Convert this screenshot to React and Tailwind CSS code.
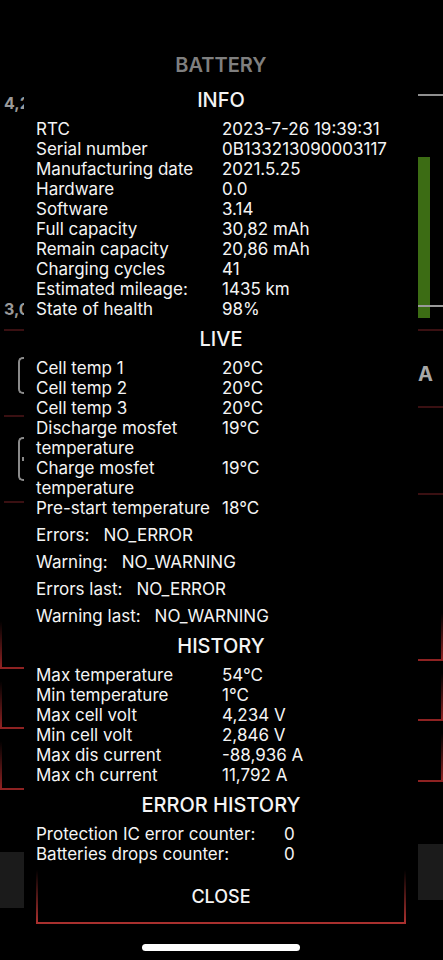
import React from "react";

const info = [
  ["RTC", "2023-7-26 19:39:31"],
  ["Serial number", "0B133213090003117"],
  ["Manufacturing date", "2021.5.25"],
  ["Hardware", "0.0"],
  ["Software", "3.14"],
  ["Full capacity", "30,82 mAh"],
  ["Remain capacity", "20,86 mAh"],
  ["Charging cycles", "41"],
  ["Estimated mileage:", "1435 km"],
  ["State of health", "98%"],
];

const live = [
  ["Cell temp 1", "20°C"],
  ["Cell temp 2", "20°C"],
  ["Cell temp 3", "20°C"],
  ["Discharge mosfet temperature", "19°C"],
  ["Charge mosfet temperature", "19°C"],
  ["Pre-start temperature", "18°C"],
];

const status = [
  ["Errors:", "NO_ERROR"],
  ["Warning:", "NO_WARNING"],
  ["Errors last:", "NO_ERROR"],
  ["Warning last:", "NO_WARNING"],
];

const history = [
  ["Max temperature", "54°C"],
  ["Min temperature", "1°C"],
  ["Max cell volt", "4,234 V"],
  ["Min cell volt", "2,846 V"],
  ["Max dis current", "-88,936 A"],
  ["Max ch current", "11,792 A"],
];

const errorHistory = [
  ["Protection IC error counter:", "0"],
  ["Batteries drops counter:", "0"],
];

const Row = ({ label, value, wide }) => (
  <div className="flex leading-5">
    <div className={wide ? "w-[248px] shrink-0" : "w-[186px] shrink-0"}>
      {label}
    </div>
    <div>{value}</div>
  </div>
);

const SectionTitle = ({ children }) => (
  <div className="mt-[8px] text-center text-[20px] leading-6 font-medium">
    {children}
  </div>
);

// red frame corners peeking out at the side of the dialog
const RedCorner = ({ side, className }) => (
  <div className={"flex flex-col " + className}>
    <div className={side === "left" ? "flex flex-1" : "flex flex-1 justify-end"}>
      <div className="w-[2px] bg-linear-to-b from-transparent to-[#8e2222]" />
    </div>
    <div className="h-[2px] bg-[#8e2222]" />
  </div>
);

const FaintLine = ({ className }) => (
  <div className={"h-[2px] bg-[#3a1012] " + className} />
);

const LeftStrip = () => (
  <div className="w-[24px] shrink-0 overflow-hidden flex flex-col">
    <div className="mt-[93px] pl-[4px] text-[16px] leading-5 font-bold text-[#9a9a9a] whitespace-nowrap">
      4,23
    </div>
    <div className="mt-[186px] pl-[4px] text-[16px] leading-5 font-bold text-[#9a9a9a] whitespace-nowrap">
      3,02
    </div>
    <FaintLine className="mt-[10px] ml-[4px]" />
    <div className="mt-[26px] ml-[18px] h-[37px] w-[10px] border-2 border-r-0 border-[#8a8a8a] rounded-l-[5px]" />
    <FaintLine className="mt-[21px] ml-[4px]" />
    <div className="mt-[20px] ml-[18px] h-[44px] w-[10px] border-2 border-r-0 border-[#8a8a8a] rounded-l-[5px] flex items-center">
      <div className="ml-[2px] h-[4px] w-[2px] bg-[#8a8a8a]" />
    </div>
    <FaintLine className="mt-[20px] ml-[4px]" />
    <RedCorner side="left" className="mt-[118px] h-[48px]" />
    <RedCorner side="left" className="mt-[12px] h-[48px]" />
    <RedCorner side="left" className="mt-[12px] h-[49px]" />
    <div className="mt-[62px] h-[56px] bg-[#1b1b1b]" />
  </div>
);

const RightStrip = () => (
  <div className="w-[25px] shrink-0 overflow-hidden flex flex-col">
    <div className="mt-[94px] h-[2px] bg-[#8f8f8f]" />
    <div className="mt-[61px] h-[148px] w-[12px] bg-[#3c6c14]" />
    <div className="h-[2px] bg-[#9a9a9a]" />
    <div className="h-[11px] w-[12px] bg-[#3c6c14]" />
    <FaintLine className="mt-[11px]" />
    <div className="mt-[31px] text-[20px] leading-6 font-bold text-[#a8a8a8]">
      A
    </div>
    <FaintLine className="mt-[20px]" />
    <FaintLine className="mt-[85px]" />
    <RedCorner side="right" className="mt-[118px] h-[48px]" />
    <RedCorner side="right" className="mt-[12px] h-[48px]" />
    <RedCorner side="right" className="mt-[12px] h-[49px]" />
    <div className="mt-[62px] h-[56px] bg-[#1b1b1b]" />
  </div>
);

export default function App() {
  return (
    <div className="h-[960px] w-full bg-black overflow-hidden flex font-[Inter,sans-serif]">
      <LeftStrip />
      <div className="flex-1 bg-black text-[#f4f4f4] text-[17px] px-3 flex flex-col">
        <div className="mt-[53px] text-center text-[20px] leading-6 font-semibold text-[#7f7f7f]">
          BATTERY
        </div>
        <div className="mt-[11px] text-center text-[20px] leading-6 font-medium">
          INFO
        </div>
        <div className="mt-[7px]">
          {info.map(([l, v]) => (
            <Row key={l} label={l} value={v} />
          ))}
        </div>

        <SectionTitle>LIVE</SectionTitle>
        <div className="mt-[7px]">
          {live.map(([l, v]) => (
            <Row key={l} label={l} value={v} />
          ))}
        </div>
        <div>
          {status.map(([l, v]) => (
            <div key={l} className="mt-[7px] flex gap-[14px] leading-5">
              <span>{l}</span>
              <span>{v}</span>
            </div>
          ))}
        </div>

        <SectionTitle>HISTORY</SectionTitle>
        <div className="mt-[7px]">
          {history.map(([l, v]) => (
            <Row key={l} label={l} value={v} />
          ))}
        </div>

        <SectionTitle>ERROR HISTORY</SectionTitle>
        <div className="mt-[7px]">
          {errorHistory.map(([l, v]) => (
            <Row key={l} label={l} value={v} wide />
          ))}
        </div>

        <div className="mt-[6px] h-[54px] flex flex-col">
          <div className="flex flex-1">
            <div className="w-[2px] bg-linear-to-b from-transparent to-[#a8302e]" />
            <div className="flex-1 flex items-center justify-center text-[18px] font-medium">
              CLOSE
            </div>
            <div className="w-[2px] bg-linear-to-b from-transparent to-[#a8302e]" />
          </div>
          <div className="h-[2px] bg-[#a8302e]" />
        </div>

        <div className="mt-[20px] mx-auto h-[7px] w-[158px] rounded-full bg-white" />
      </div>
      <RightStrip />
    </div>
  );
}
